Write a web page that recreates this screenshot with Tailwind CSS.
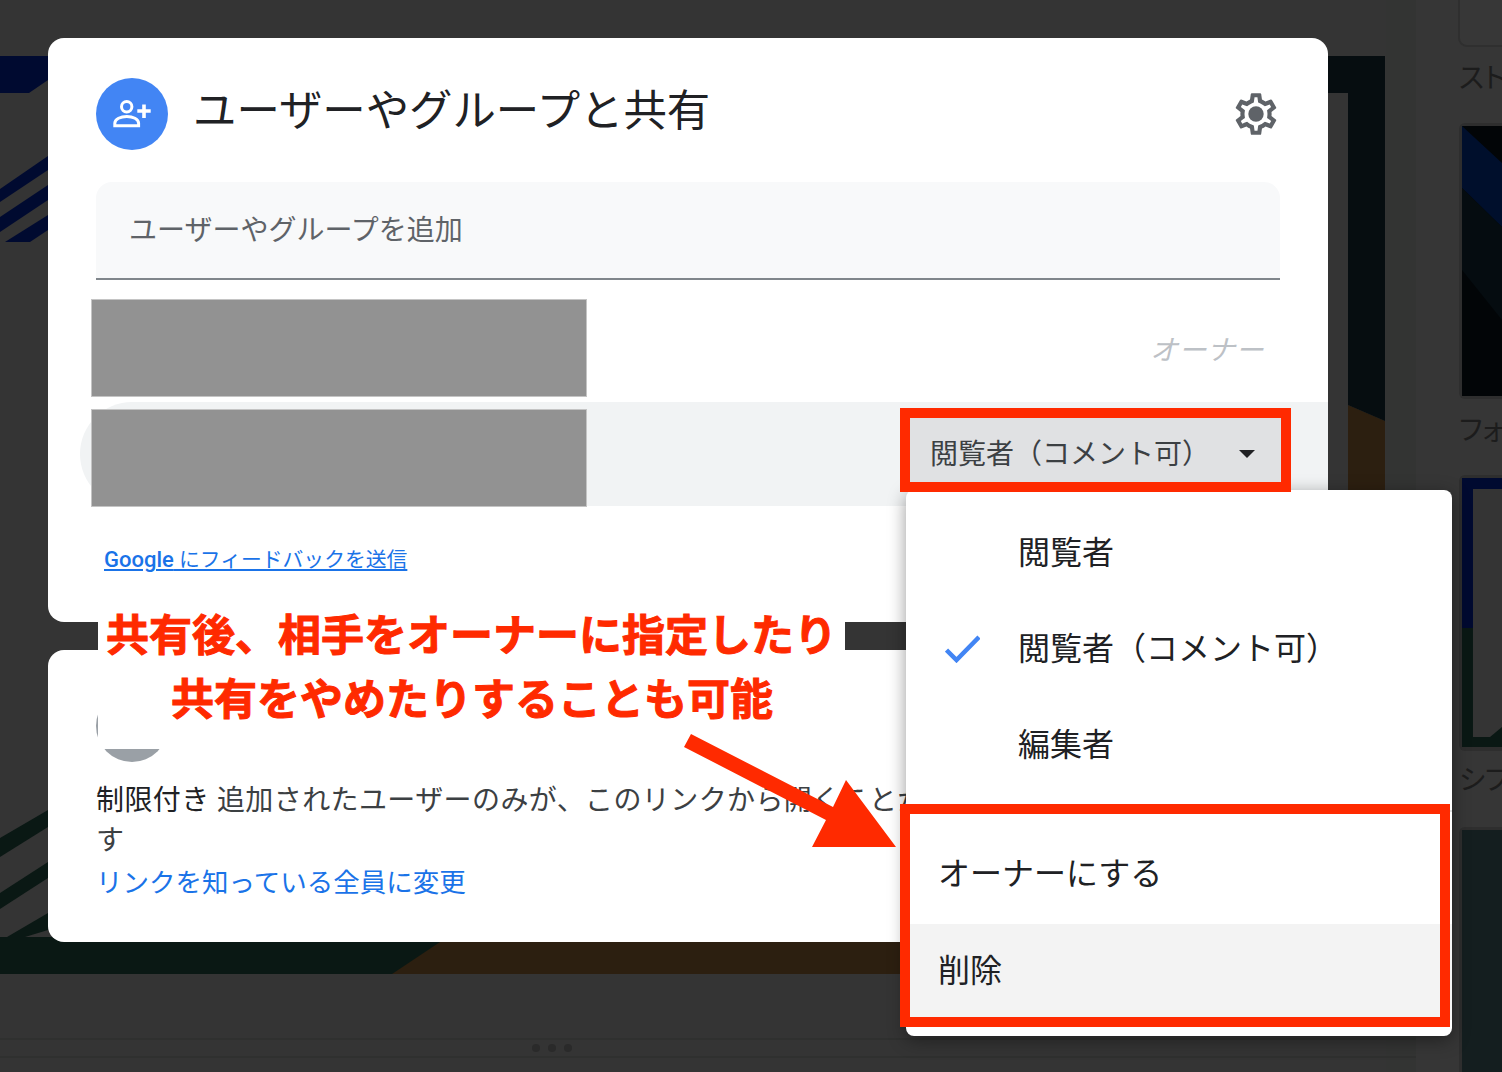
<!DOCTYPE html>
<html lang="ja">
<head>
    <meta charset="UTF-8">
    <meta name="viewport" content="width=device-width, initial-scale=1.0">
    <title>ユーザーやグループと共有</title>
    <script src="https://cdn.jsdelivr.net/npm/@tailwindcss/browser@4"></script>
</head>
<body class="bg-[#343434]">
    <div class="relative w-[1502px] h-[1072px] overflow-hidden bg-[#343434] font-['Roboto','Noto_Sans_CJK_JP',sans-serif]">

        <!-- 暗くなった背景のドキュメント -->
        <svg class="absolute inset-0" width="1502" height="1072" viewBox="0 0 1502 1072">
            <rect x="1416" y="0" width="86" height="1072" fill="#363636"/>
            <rect x="1386" y="0" width="30" height="1072" fill="#333433"/>
            <rect x="1459" y="-10" width="60" height="56" rx="8" fill="#373737" stroke="#2f2f2f" stroke-width="2"/>

            <!-- スライド左上 -->
            <polygon points="0,56 48,56 48,80 29,93 0,93" fill="#000a30"/>
            <polygon points="48,156 48,170 0,202 0,189" fill="#000a30"/>
            <polygon points="48,185 48,200 0,232 0,217" fill="#000a30"/>
            <polygon points="48,215 48,230 30,242 5,242" fill="#000a30"/>

            <!-- スライド右側 -->
            <rect x="1328" y="56" width="57" height="37" fill="#060d10"/>
            <polygon points="1348,405 1385,421 1385,500 1348,500" fill="#2c1f10"/>
            <polygon points="1348,93 1385,93 1385,421 1348,405" fill="#060d10"/>

            <!-- スライド左下 -->
            <polygon points="48,810 48,827 0,857 0,838" fill="#0a1814"/>
            <polygon points="48,862 48,878 0,909 0,893" fill="#0a1814"/>
            <polygon points="48,913 48,930 25,937 7,937" fill="#0a1814"/>
            <rect x="0" y="937" width="920" height="37" fill="#0a1814"/>
            <polygon points="440,942 920,942 920,974 392,974" fill="#2c1f10"/>

            <!-- 下部のガイド -->
            <rect x="0" y="1038" width="1416" height="2" fill="#2f302f"/>
            <rect x="0" y="1056" width="1416" height="2" fill="#2f302f"/>
            <circle cx="536" cy="1048" r="4" fill="#2a2a2a"/>
            <circle cx="552" cy="1048" r="4" fill="#2a2a2a"/>
            <circle cx="568" cy="1048" r="4" fill="#2a2a2a"/>

            <!-- 右側のサムネイル -->
            <rect x="1459" y="123" width="60" height="276" rx="6" fill="#2e2e2e"/>
            <rect x="1462" y="126" width="40" height="270" fill="#020507"/>
            <polygon points="1462,126 1502,163 1502,227 1462,188" fill="#000f2c"/>
            <polygon points="1462,188 1502,227 1502,320 1462,270" fill="#050c10"/>

            <rect x="1459" y="475" width="60" height="276" rx="6" fill="#2e2e2e"/>
            <rect x="1462" y="478" width="40" height="150" fill="#000a30"/>
            <rect x="1462" y="628" width="40" height="119" fill="#0a1814"/>
            <rect x="1473" y="489" width="29" height="248" fill="#343434"/>
            <polygon points="1490,737 1502,727 1502,737" fill="#0a1814"/>

            <rect x="1459" y="827" width="60" height="250" rx="6" fill="#2e2e2e"/>
            <rect x="1462" y="830" width="40" height="242" fill="#141e1f"/>
        </svg>

        <span class="absolute left-[1459px] top-[59px] text-[28px] leading-[40px] text-[#1c1c1c] whitespace-nowrap [font-feature-settings:'palt']">スト</span>
        <span class="absolute left-[1459px] top-[411px] text-[28px] leading-[40px] text-[#1c1c1c] whitespace-nowrap [font-feature-settings:'palt']">フォ</span>
        <span class="absolute left-[1459px] top-[761px] text-[28px] leading-[40px] text-[#1c1c1c] whitespace-nowrap [font-feature-settings:'palt']">シフ</span>

        <!-- 共有ダイアログ -->
        <div class="absolute left-[48px] top-[38px] w-[1280px] h-[584px] bg-white rounded-2xl pt-10 px-12">
            <div class="flex items-center justify-between h-[72px]">
                <div class="flex items-center gap-[25px]">
                    <div class="w-[72px] h-[72px] rounded-full bg-[#4285f4]">
                        <svg width="72" height="72" viewBox="0 0 72 72" fill="none" stroke="white" stroke-width="3">
                            <circle cx="30.7" cy="28.7" r="5.2"/>
                            <path d="M18.8 47.8v-2.6c0-4.2 6-6.7 12-6.7s11.8 2.5 11.8 6.7v2.6z"/>
                            <path d="M41.3 33h13.4M48 26.5v13.4" stroke-width="3.6"/>
                        </svg>
                    </div>
                    <h1 class="text-[43.4px] leading-[64px] -mt-[5px] font-normal text-[#202124] whitespace-nowrap">ユーザーやグループと共有</h1>
                </div>
                <svg class="-mr-px" width="50" height="50" viewBox="0 0 24 24" fill="#5f6368">
                    <path d="M19.43 12.98c.04-.32.07-.64.07-.98 0-.34-.03-.66-.07-.98l2.11-1.65c.19-.15.24-.42.12-.64l-2-3.46c-.09-.16-.26-.25-.44-.25-.06 0-.12.01-.17.03l-2.49 1c-.52-.4-1.08-.73-1.69-.98l-.38-2.65C14.46 2.18 14.25 2 14 2h-4c-.25 0-.46.18-.49.42l-.38 2.65c-.61.25-1.17.59-1.69.98l-2.49-1c-.06-.02-.12-.03-.18-.03-.17 0-.34.09-.43.25l-2 3.46c-.13.22-.07.49.12.64l2.11 1.65c-.04.32-.07.65-.07.98 0 .33.03.66.07.98l-2.11 1.65c-.19.15-.24.42-.12.64l2 3.46c.09.16.26.25.44.25.06 0 .12-.01.17-.03l2.49-1c.52.4 1.08.73 1.69.98l.38 2.65c.03.24.24.42.49.42h4c.25 0 .46-.18.49-.42l.38-2.65c.61-.25 1.17-.59 1.69-.98l2.49 1c.06.02.12.03.18.03.17 0 .34-.09.43-.25l2-3.46c.12-.22.07-.49-.12-.64l-2.11-1.65zm-1.98-1.71c.04.31.05.52.05.73 0 .21-.02.43-.05.73l-.14 1.13.89.7 1.08.84-.7 1.21-1.27-.51-1.04-.42-.9.68c-.43.32-.84.56-1.25.73l-1.06.43-.16 1.13-.2 1.35h-1.4l-.19-1.35-.16-1.13-1.06-.43c-.43-.18-.83-.41-1.23-.71l-.91-.7-1.06.43-1.27.51-.7-1.21 1.08-.84.89-.7-.14-1.13c-.03-.31-.05-.54-.05-.74s.02-.43.05-.73l.14-1.13-.89-.7-1.08-.84.7-1.21 1.27.51 1.04.42.9-.68c.43-.32.84-.56 1.25-.73l1.06-.43.16-1.13.2-1.35h1.39l.19 1.35.16 1.13 1.06.43c.43.18.83.41 1.23.71l.91.7 1.06-.43 1.27-.51.7 1.21-1.07.85-.89.7.14 1.13z"/>
                    <circle cx="12" cy="12" r="3.7"/>
                </svg>
            </div>

            <!-- 入力欄 -->
            <div class="mt-8 h-[98px] bg-[#f8f9fa] rounded-t-2xl border-b-2 border-[#80868b] pl-[33px] pt-0.5 flex items-center">
                <span class="text-[28px] text-[#5f6368] whitespace-nowrap">ユーザーやグループを追加</span>
            </div>

            <!-- オーナーの行 -->
            <div class="mt-5 h-24 flex items-center justify-between pr-[16px]">
                <div class="-ml-[5px] w-[496px] h-[98px] bg-[#929292] border border-[#c4c4c4]"></div>
                <span class="mt-1.5 text-[28px] tracking-[0.5px] italic text-[#bdc1c6] whitespace-nowrap">オーナー</span>
            </div>

            <!-- 選択中の行 -->
            <div class="mt-1.5 -ml-4 -mr-12 h-[104px] bg-[#f1f3f4] rounded-l-[52px] flex justify-between pl-[11px] pr-[37px]">
                <div class="w-[496px] h-[98px] mt-[7px] bg-[#929292] border border-[#c4c4c4]"></div>
                <div class="relative z-30 mt-1.5 w-[391px] h-[84px] border-[10px] border-[#ff2a00] bg-[#e0e1e3] flex items-center justify-between pl-[20px] pr-[26px]">
                    <span class="mt-[10px] text-[28px] text-[#3c4043] whitespace-nowrap">閲覧者（コメント可）</span>
                    <span class="w-0 h-0 border-x-[8px] border-x-transparent border-t-[8px] border-t-[#202124] mt-2"></span>
                </div>
            </div>

            <a class="block mt-[38px] ml-2 h-8 leading-8 text-[20.8px] text-[#1a73e8] underline whitespace-nowrap" href="#"><span class="text-[22px] font-medium">Google</span> にフィードバックを送信</a>
        </div>

        <!-- リンクのダイアログ -->
        <div class="absolute left-[48px] top-[650px] w-[1280px] h-[292px] bg-white rounded-2xl pt-10 px-12">
            <div class="w-[72px] h-[72px] rounded-full bg-[#9aa0a6]"></div>
            <p class="mt-[19px] text-[28px] leading-[40px] tracking-[0.4px] text-[#3c4043] whitespace-nowrap"><span class="text-[#202124]">制限付き</span> 追加されたユーザーのみが、このリンクから開くことができま<br>す</p>
            <a class="block mt-[2px] text-[26.5px] leading-[40px] text-[#1a73e8] whitespace-nowrap" href="#">リンクを知っている全員に変更</a>
        </div>

        <!-- 注釈の白い下地 -->
        <div class="absolute left-[98px] top-[618px] w-[747px] h-[32px] bg-white"></div>
        <div class="absolute left-[98px] top-[650px] w-[680px] h-[99px] bg-white"></div>

        <!-- 権限メニュー -->
        <div class="absolute z-20 left-[906px] top-[490px] w-[546px] h-[546px] bg-white rounded-lg shadow-[0_4px_18px_rgba(0,0,0,0.4)] pt-3.5 text-[32px] text-[#202124]">
            <div class="h-24 pt-0.5 flex items-center pl-[112px] whitespace-nowrap">閲覧者</div>
            <div class="h-24 pt-0.5 flex items-center pl-[39px] gap-[38px] whitespace-nowrap">
                <svg width="35" height="28" viewBox="0 0 35 28" fill="none" stroke="#4285f4" stroke-width="4.5">
                    <path d="M1.5 15l10 10L34 2"/>
                </svg>
                <span>閲覧者（コメント可）</span>
            </div>
            <div class="h-24 pt-0.5 flex items-center pl-[112px] whitespace-nowrap">編集者</div>
            <div class="mt-[18px] h-0.5 bg-[#e0e0e0]"></div>
            <div class="mt-[16px] h-24 pb-1 flex items-center pl-[32px] whitespace-nowrap">オーナーにする</div>
            <div class="h-24 pb-0.5 flex items-center pl-[32px] bg-[#f3f3f3] whitespace-nowrap">削除</div>
        </div>

        <!-- 注釈 -->
        <div class="absolute z-30 left-[900px] top-[804px] w-[550px] h-[223px] border-[10px] border-[#ff2a00]"></div>
        <div class="absolute z-30 left-[106px] top-[605px] text-[43px] leading-[62px] font-bold [-webkit-text-stroke:1px_#ff2a00] text-[#ff2a00] whitespace-nowrap">共有後、相手をオーナーに指定したり</div>
        <div class="absolute z-30 left-[171px] top-[669px] text-[43px] leading-[62px] font-bold [-webkit-text-stroke:1px_#ff2a00] text-[#ff2a00] whitespace-nowrap">共有をやめたりすることも可能</div>
        <svg class="absolute z-30 inset-0 pointer-events-none" width="1502" height="1072" viewBox="0 0 1502 1072">
            <polygon points="691,734 833,807 846,780 896,847 812,847 826,820 684,747" fill="#ff2a00"/>
        </svg>
    </div>
</body>
</html>
